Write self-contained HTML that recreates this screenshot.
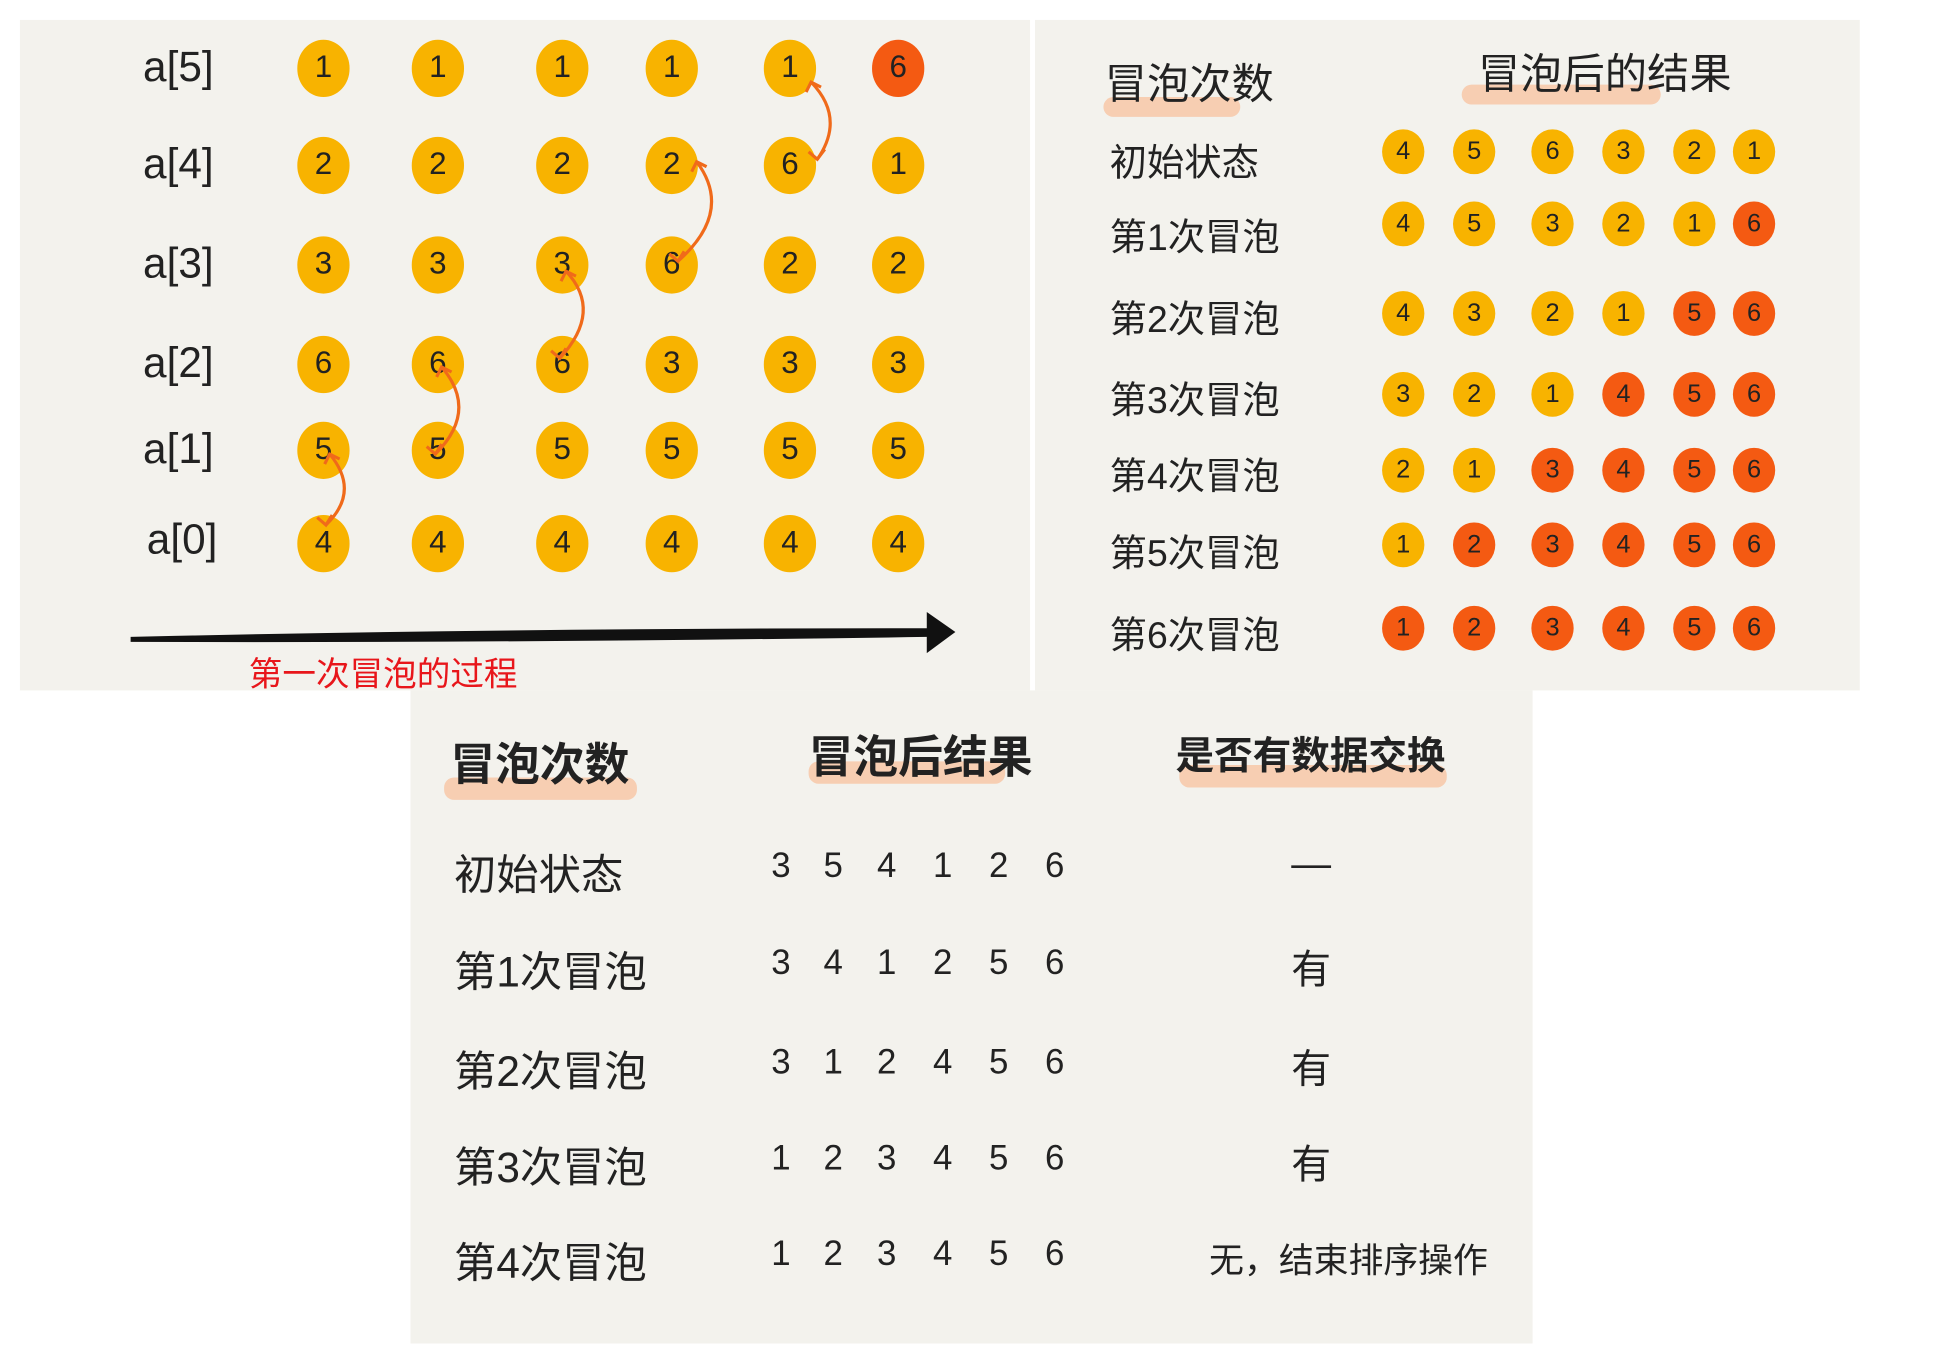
<!DOCTYPE html>
<html><head><meta charset="utf-8"><style>
html,body{margin:0;padding:0;background:#fff;width:1950px;height:1362px;overflow:hidden}
#w{position:absolute;left:0;top:0;width:1568px;height:1095px;transform:scale(1.244);transform-origin:0 0;font-family:"Liberation Sans","Noto Sans CJK SC",sans-serif;color:#222}
.p{position:absolute;background:#f3f2ed}
.c{position:absolute;border-radius:50%;background:#f8b300;text-align:center;font-family:"Liberation Sans",sans-serif;color:#222}
.r{background:#f45a12}
.t{position:absolute;white-space:nowrap}
.hl{position:absolute;background:#f7c4a2;border-radius:8px;opacity:.8}
</style></head><body><div id="w">
<div class="p" style="left:16px;top:16px;width:812px;height:539px"></div>
<div class="p" style="left:832px;top:16px;width:663px;height:539px"></div>
<div class="p" style="left:330px;top:555px;width:902px;height:525px"></div>

<div class="t" style="left:115px;top:35px;font-size:34px">a[5]</div>
<div class="t" style="left:115px;top:113px;font-size:34px">a[4]</div>
<div class="t" style="left:115px;top:193px;font-size:34px">a[3]</div>
<div class="t" style="left:115px;top:273px;font-size:34px">a[2]</div>
<div class="t" style="left:115px;top:342px;font-size:34px">a[1]</div>
<div class="t" style="left:118px;top:415px;font-size:34px">a[0]</div>

<div id="L"></div>
<svg style="position:absolute;left:0;top:0;z-index:2" width="830" height="560">
<g fill="none" stroke="#f06a1a" stroke-width="2.5">
<path d="M652 66 Q680 95 657 128"/><path d="M560 130 Q590 170 545 210"/><path d="M455 218 Q485 250 450 288"/><path d="M355 295 Q385 330 350 365"/><path d="M265 365 Q290 395 262 422"/>
<path d="M648 74 L652 66 L660 70"/><path d="M650 122 L657 128 L663 120"/><path d="M556 138 L560 130 L568 134"/><path d="M538 204 L545 210 L550 202"/><path d="M451 226 L455 218 L463 222"/><path d="M443 282 L450 288 L455 280"/><path d="M351 303 L355 295 L363 299"/><path d="M343 359 L350 365 L355 357"/><path d="M261 373 L265 365 L273 369"/><path d="M255 416 L262 422 L267 414"/>
</g>
<path d="M105 512 Q400 505 745 505 L745 492 L768 508 L745 525 L745 512 Q400 517 105 516 Z" fill="#111"/>
</svg>
<div class="t" style="left:200px;top:520px;font-size:27px;color:#e8161b">第一次冒泡的过程</div>

<div class="hl" style="left:887px;top:78px;width:110px;height:16px"></div>
<div class="hl" style="left:1175px;top:68px;width:160px;height:16px"></div>
<div class="t" style="left:888px;top:40px;font-size:34px">冒泡次数</div>
<div class="t" style="left:1188px;top:32px;font-size:34px">冒泡后的结果</div>
<div class="t" style="left:892px;top:106px;font-size:30px">初始状态</div>
<div class="t" style="left:892px;top:166px;font-size:30px">第1次冒泡</div>
<div class="t" style="left:892px;top:232px;font-size:30px">第2次冒泡</div>
<div class="t" style="left:892px;top:297px;font-size:30px">第3次冒泡</div>
<div class="t" style="left:892px;top:358px;font-size:30px">第4次冒泡</div>
<div class="t" style="left:892px;top:420px;font-size:30px">第5次冒泡</div>
<div class="t" style="left:892px;top:486px;font-size:30px">第6次冒泡</div>
<div id="R"></div>

<div class="hl" style="left:357px;top:625px;width:155px;height:18px"></div>
<div class="hl" style="left:650px;top:612px;width:158px;height:18px"></div>
<div class="hl" style="left:948px;top:615px;width:215px;height:18px"></div>
<div class="t" style="left:362px;top:586px;font-size:36px;font-weight:bold">冒泡次数</div>
<div class="t" style="left:650px;top:580px;font-size:36px;font-weight:bold">冒泡后结果</div>
<div class="t" style="left:945px;top:582px;font-size:31px;font-weight:bold">是否有数据交换</div>
<div id="B"></div>
</div>
<script>
function c(id,x,y,r,n,red){var d=document.createElement('div');d.className='c'+(red?' r':'');d.style.cssText='left:'+(x-r)+'px;top:'+(y-r*1.08)+'px;width:'+(2*r)+'px;height:'+(2.16*r)+'px;line-height:'+(2.16*r)+'px;font-size:'+(r*1.2)+'px';d.textContent=n;document.getElementById(id).parentNode.appendChild(d);}
var lx=[260,352,452,540,635,722],ly=[55,133,213,293,362,437];
var L=[[1,1,1,1,1,6],[2,2,2,2,6,1],[3,3,3,6,2,2],[6,6,6,3,3,3],[5,5,5,5,5,5],[4,4,4,4,4,4]];
for(var i=0;i<6;i++)for(var j=0;j<6;j++)c('L',lx[j],ly[i],21,L[i][j],i==0&&j==5);
var rx=[1128,1185,1248,1305,1362,1410],ry=[122,180,252,317,378,438,505];
var R=[[4,5,6,3,2,1],[4,5,3,2,1,6],[4,3,2,1,5,6],[3,2,1,4,5,6],[2,1,3,4,5,6],[1,2,3,4,5,6],[1,2,3,4,5,6]];
for(i=0;i<7;i++)for(j=0;j<6;j++)c('R',rx[j],ry[i],17,R[i][j],j>=6-i);
var B=document.getElementById('B').parentNode;
function t(s,x,y,fs){var d=document.createElement('div');d.className='t';d.style.cssText='left:'+x+'px;top:'+y+'px;font-size:'+fs+'px';d.textContent=s;B.appendChild(d);}
var rows=[['初始状态',[3,5,4,1,2,6],'—',700],['第1次冒泡',[3,4,1,2,5,6],'有',778],['第2次冒泡',[3,1,2,4,5,6],'有',858],['第3次冒泡',[1,2,3,4,5,6],'有',935],['第4次冒泡',[1,2,3,4,5,6],'无，结束排序操作',1012]];
var nx=[620,662,705,750,795,840];
rows.forEach(function(r){t(r[0],365,r[3]-24,34);r[1].forEach(function(n,k){t(String(n),nx[k],r[3]-20,28);});
if(r[2].length>1)t(r[2],972,r[3]-20,28);else t(r[2],1038,r[3]-24,32);});
</script>
</body></html>
